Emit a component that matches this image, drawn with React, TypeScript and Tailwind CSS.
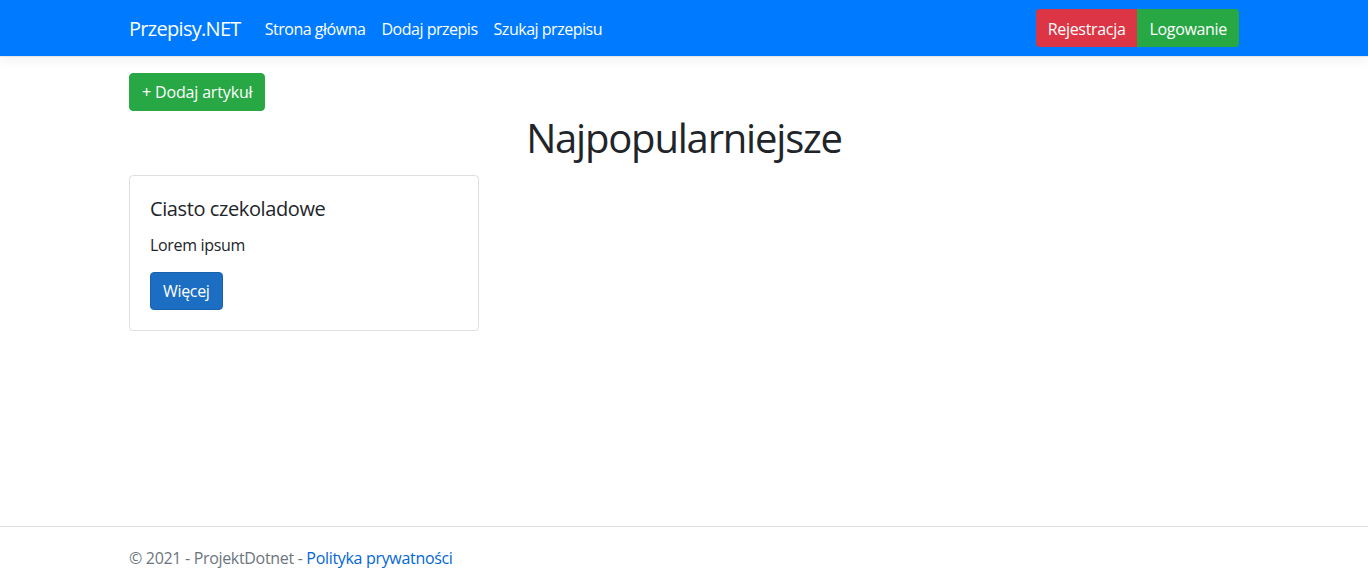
import React from "react";

const font = { fontFamily: '"Segoe UI", "Open Sans", "Noto Sans", sans-serif' };

function Navbar() {
  return (
    <header className="bg-[#007bff] shadow-[0_4px_12px_rgba(0,0,0,0.05)] border-b border-[#e5e5e5]">
      <nav className="max-w-[1140px] mx-auto px-[15px] h-[56px] flex items-center">
        <a className="text-white text-[20px] leading-[30px] pt-[2px] mr-4 tracking-[-0.035em]">Przepisy.NET</a>
        <ul className="flex items-center tracking-[-0.03em]">
          {["Strona główna", "Dodaj przepis", "Szukaj przepisu"].map((l) => (
            <li key={l}>
              <a className="block px-2 pt-[9px] pb-[7px] text-white text-base leading-6">{l}</a>
            </li>
          ))}
        </ul>
        <div className="ml-auto flex">
          <a className="bg-[#dc3545] text-white px-3 pt-[8px] pb-[6px] leading-6 rounded-l-[4px]">Rejestracja</a>
          <a className="bg-[#28a745] text-white px-3 pt-[8px] pb-[6px] leading-6 rounded-r-[4px]">Logowanie</a>
        </div>
      </nav>
    </header>
  );
}

function RecipeCard({ title, text }: { title: string; text: string }) {
  return (
    <div className="w-[350px] border border-[rgba(0,0,0,0.125)] rounded-[4px] p-5">
      <h5 className="text-[20px] leading-[24px] pt-px text-[#212529] mb-3 tracking-[-0.02em]">{title}</h5>
      <p className="text-base leading-6 text-[#212529] mb-[15px]">{text}</p>
      <a className="inline-block bg-[#1b6ec2] border border-[#1861ac] text-white px-3 py-[6px] leading-6 rounded-[4px]">
        Więcej
      </a>
    </div>
  );
}

export default function App() {
  return (
    <div className="min-h-screen flex flex-col bg-white text-[#212529] tracking-[-0.02em]" style={font}>
      <Navbar />

      <main className="flex-1">
        <div className="max-w-[1140px] mx-auto px-[15px] pt-4">
          <a className="inline-block bg-[#28a745] border border-[#28a745] text-white px-3 py-[6px] leading-6 rounded-[4px] tracking-[-0.01em]">
            + Dodaj artykuł
          </a>
          <h1 className="text-center text-[40px] leading-[48px] font-normal mt-[3px] mb-[13px] tracking-[-0.03em]">
            Najpopularniejsze
          </h1>
          <RecipeCard title="Ciasto czekoladowe" text="Lorem ipsum" />
        </div>
      </main>

      <footer className="border-t border-[#dee2e6] h-[61px]">
        <div className="max-w-[1140px] mx-auto px-[15px] leading-[60px] pt-px text-[#6c757d] whitespace-nowrap">
          © 2021 - ProjektDotnet - <a className="text-[#0366d6]">Polityka prywatności</a>
        </div>
      </footer>
    </div>
  );
}
